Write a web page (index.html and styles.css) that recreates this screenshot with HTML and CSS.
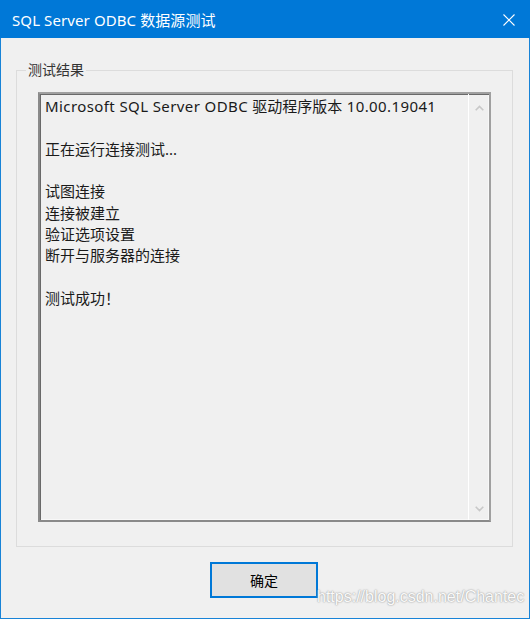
FILE: index.html
```html
<!DOCTYPE html>
<html lang="zh-CN">
<head>
<meta charset="utf-8">
<title>SQL Server ODBC 数据源测试</title>
<link rel="stylesheet" href="styles.css">
</head>
<body>
<div class="window">
  <div class="titlebar">
    <span class="title">SQL Server ODBC 数据源测试</span>
    <svg class="close" width="12" height="12" viewBox="0 0 12 12"><path d="M0.5 0.5 L11.5 11.5 M11.5 0.5 L0.5 11.5" stroke="#fff" stroke-width="1.1" fill="none"/></svg>
  </div>
  <div class="client">
    <fieldset class="group">
      <legend class="legend">测试结果</legend>
      <div class="textbox">
        <div class="text">
          <div class="line"><span class="latin">Microsoft SQL Server ODBC </span>驱动程序版本<span class="latin"> 10.00.19041</span></div>
          <div class="line">&nbsp;</div>
          <div class="line">正在运行连接测试...</div>
          <div class="line">&nbsp;</div>
          <div class="line">试图连接</div>
          <div class="line">连接被建立</div>
          <div class="line">验证选项设置</div>
          <div class="line">断开与服务器的连接</div>
          <div class="line">&nbsp;</div>
          <div class="line">测试成功！</div>
        </div>
        <div class="scrollbar">
          <svg class="arrow" width="9" height="6" viewBox="0 0 9 6"><path d="M0.7 5.3 L4.5 1.5 L8.3 5.3" stroke="#c8c8c8" stroke-width="1.6" fill="none"/></svg>
          <svg class="arrow" width="9" height="6" viewBox="0 0 9 6"><path d="M0.7 0.7 L4.5 4.5 L8.3 0.7" stroke="#c8c8c8" stroke-width="1.6" fill="none"/></svg>
        </div>
      </div>
    </fieldset>
    <div class="footer">
      <button class="btn">确定</button>
      <span class="watermark">https://blog.csdn.net/Chantec</span>
    </div>
  </div>
</div>
</body>
</html>
```
FILE: styles.css
```css
html, body {
  margin: 0;
  padding: 0;
  background: #f0f0f0;
}
.window {
  width: 530px;
  height: 619px;
  box-sizing: border-box;
  border: 1px solid #1883d7;
  border-top: none;
  display: flex;
  flex-direction: column;
  font-family: "Noto Sans", "Noto Sans CJK SC", sans-serif;
}
.titlebar {
  height: 38px;
  background: #0078d7;
  margin: 0 -1px;
  display: flex;
  align-items: center;
  justify-content: space-between;
  padding: 0 15px 0 12px;
  color: #fff;
}
.title {
  font-size: 15px;
  letter-spacing: 0.1px;
}
.close {
  display: block;
  margin-top: 1px;
}
.client {
  flex: 1;
  display: flex;
  flex-direction: column;
  padding: 0 16px 0 15px;
}
.group {
  margin: 23px 0 0 0;
  padding: 13px 21px 24px 21px;
  border: 1px solid #dcdcdc;
  min-width: 0;
}
.legend {
  font-size: 14px;
  color: #333333;
  padding: 0 2px;
  margin-left: -12px;
  line-height: 18px;
}
.textbox {
  height: 430px;
  box-sizing: border-box;
  border-style: solid;
  border-width: 2px;
  border-color: #a0a0a0 #a0a0a0 #8a8a8a #8a8a8a;
  box-shadow: inset 1px 1px 0 #696969, inset -1px -1px 0 #f8f8f8;
  background: #f0f0f0;
  display: flex;
}
.text {
  flex: 1;
  padding: 2px 0 0 5px;
  font-size: 15px;
  line-height: 21.35px;
  color: #1a1a1a;
  font-family: "Noto Sans", "Noto Sans CJK SC", sans-serif;
}
.line {
  white-space: nowrap;
}
.latin {
  letter-spacing: 0.4px;
}
.scrollbar {
  width: 20px;
  border-left: 1px solid #ffffff;
  display: flex;
  flex-direction: column;
  justify-content: space-between;
  align-items: center;
  padding: 11px 0 8px 0;
}
.arrow {
  display: block;
}
.footer {
  position: relative;
  flex: 1;
  display: flex;
  justify-content: center;
  align-items: flex-start;
  padding-top: 15px;
}
.btn {
  width: 108px;
  height: 36px;
  margin-left: -1px;
  box-sizing: border-box;
  border: 2px solid #0078d7;
  background: #e1e1e1;
  font-family: "Noto Sans CJK SC", sans-serif;
  font-size: 14px;
  color: #000;
  padding: 0;
}
.watermark {
  position: absolute;
  left: 301px;
  top: 41px;
  font-family: "Liberation Sans", Arial, sans-serif;
  font-size: 16px;
  color: #fafafa;
  text-shadow: 0 0 2px #9a9a9a, 0 0 1px #b0b0b0;
}
```
